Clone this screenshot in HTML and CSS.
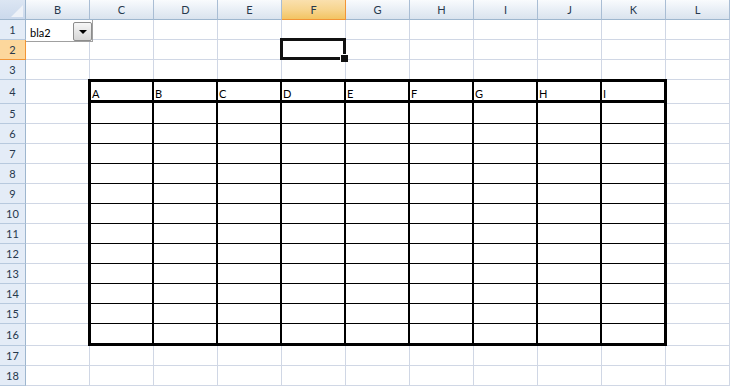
FILE: index.html
```html
<!DOCTYPE html>
<html lang="en">
<head>
  <meta charset="UTF-8" />
  <title>Book1 - Sheet1</title>
  <link rel="stylesheet" href="styles.css">
</head>
<body>

<div class="colheads">
  <div class="corner"></div>
  <div class="ch">B</div>
  <div class="ch">C</div>
  <div class="ch">D</div>
  <div class="ch">E</div>
  <div class="ch sel">F</div>
  <div class="ch">G</div>
  <div class="ch">H</div>
  <div class="ch">I</div>
  <div class="ch">J</div>
  <div class="ch">K</div>
  <div class="ch">L</div>
</div>

<div class="main">
  <div class="rowheads">
    <div class="rh">1</div>
    <div class="rh sel">2</div>
    <div class="rh">3</div>
    <div class="rh">4</div>
    <div class="rh">5</div>
    <div class="rh">6</div>
    <div class="rh">7</div>
    <div class="rh">8</div>
    <div class="rh">9</div>
    <div class="rh">10</div>
    <div class="rh">11</div>
    <div class="rh">12</div>
    <div class="rh">13</div>
    <div class="rh">14</div>
    <div class="rh">15</div>
    <div class="rh">16</div>
    <div class="rh">17</div>
    <div class="rh">18</div>
  </div>

  <div class="sheet">
    <!-- dropdown in B1 -->
    <div class="combo">
      <span>bla2</span>
      <div class="combo-btn"><i></i></div>
    </div>

    <!-- selected cell F2 -->
    <div class="c active"></div>

    <!-- bordered table C4:K16 -->
    <div class="tbl">
      <div class="th">A</div><div class="th">B</div><div class="th">C</div><div class="th">D</div><div class="th">E</div><div class="th">F</div><div class="th">G</div><div class="th">H</div><div class="th">I</div>
      <div></div><div></div><div></div><div></div><div></div><div></div><div></div><div></div><div></div>
      <div></div><div></div><div></div><div></div><div></div><div></div><div></div><div></div><div></div>
      <div></div><div></div><div></div><div></div><div></div><div></div><div></div><div></div><div></div>
      <div></div><div></div><div></div><div></div><div></div><div></div><div></div><div></div><div></div>
      <div></div><div></div><div></div><div></div><div></div><div></div><div></div><div></div><div></div>
      <div></div><div></div><div></div><div></div><div></div><div></div><div></div><div></div><div></div>
      <div></div><div></div><div></div><div></div><div></div><div></div><div></div><div></div><div></div>
      <div></div><div></div><div></div><div></div><div></div><div></div><div></div><div></div><div></div>
      <div></div><div></div><div></div><div></div><div></div><div></div><div></div><div></div><div></div>
      <div></div><div></div><div></div><div></div><div></div><div></div><div></div><div></div><div></div>
      <div></div><div></div><div></div><div></div><div></div><div></div><div></div><div></div><div></div>
      <div></div><div></div><div></div><div></div><div></div><div></div><div></div><div></div><div></div>
    </div>

    <!-- plain cells fill the remaining slots -->
    <!-- row 1 -->
    <div class="c"></div><div class="c"></div><div class="c"></div><div class="c"></div><div class="c"></div>
    <div class="c"></div><div class="c"></div><div class="c"></div><div class="c"></div><div class="c"></div>
    <!-- row 2 -->
    <div class="c"></div><div class="c"></div><div class="c"></div><div class="c"></div><div class="c"></div>
    <div class="c"></div><div class="c"></div><div class="c"></div><div class="c"></div><div class="c"></div>
    <!-- row 3 -->
    <div class="c"></div><div class="c"></div><div class="c"></div><div class="c"></div><div class="c"></div><div class="c"></div>
    <div class="c"></div><div class="c"></div><div class="c"></div><div class="c"></div><div class="c"></div>
    <!-- rows 4-16, columns B and L -->
    <div class="c"></div><div class="c"></div>
    <div class="c"></div><div class="c"></div>
    <div class="c"></div><div class="c"></div>
    <div class="c"></div><div class="c"></div>
    <div class="c"></div><div class="c"></div>
    <div class="c"></div><div class="c"></div>
    <div class="c"></div><div class="c"></div>
    <div class="c"></div><div class="c"></div>
    <div class="c"></div><div class="c"></div>
    <div class="c"></div><div class="c"></div>
    <div class="c"></div><div class="c"></div>
    <div class="c"></div><div class="c"></div>
    <div class="c"></div><div class="c"></div>
    <!-- rows 17-18 -->
    <div class="c"></div><div class="c"></div><div class="c"></div><div class="c"></div><div class="c"></div><div class="c"></div>
    <div class="c"></div><div class="c"></div><div class="c"></div><div class="c"></div><div class="c"></div>
    <div class="c"></div><div class="c"></div><div class="c"></div><div class="c"></div><div class="c"></div><div class="c"></div>
    <div class="c"></div><div class="c"></div><div class="c"></div><div class="c"></div><div class="c"></div>
  </div>
</div>

</body>
</html>
```

FILE: styles.css
```css
:root {
  --rows: 20px 20px 20px 24px repeat(11, 20px) 22px 20px 20px;
}
* {
  box-sizing: border-box;
}
body {
  margin: 0;
  background: #fff;
  font-family: Lato, "Liberation Sans", sans-serif;
  font-size: 11px;
  color: #000;
  overflow: hidden;
}

/* column headers */
.colheads {
  display: flex;
  height: 20px;
}
.corner {
  flex: none;
  width: 26px;
  position: relative;
  background: linear-gradient(#dce6f3, #cbd9ec);
  border-right: 1px solid #9eb6ce;
  border-bottom: 1px solid #9eb6ce;
}
.corner::after {
  content: "";
  position: absolute;
  right: 2px;
  bottom: 2px;
  border-style: solid;
  border-width: 0 0 12px 12px;
  border-color: transparent transparent #eef2f8 transparent;
}
.ch {
  flex: none;
  width: 64px;
  padding-top: 3px;
  line-height: 13px;
  text-align: center;
  color: #27384d;
  background: linear-gradient(#f9fbfd, #e9eff6 50%, #dae3ee);
  border-right: 1px solid #a9bdd4;
  border-bottom: 1px solid #9eb6ce;
}
.ch.sel {
  background: linear-gradient(#fae0ae, #f7d58f 50%, #f2c462);
  border-right-color: #f29536;
  border-bottom-color: #f29536;
}

/* row headers + sheet */
.main {
  display: flex;
}
.rowheads {
  flex: none;
  width: 26px;
  display: grid;
  grid-template-rows: var(--rows);
}
.rh {
  display: flex;
  align-items: center;
  justify-content: center;
  line-height: 13px;
  color: #27384d;
  background: #e4ecf7;
  border-right: 1px solid #9eb6ce;
  border-bottom: 1px solid #b7c9de;
}
.rh.sel {
  background: #fcd79c;
  border-right-color: #f29536;
  border-bottom-color: #f29536;
}
.sheet {
  display: grid;
  grid-template-columns: repeat(11, 64px);
  grid-template-rows: var(--rows);
}
.c {
  border-right: 1px solid #d0d7e5;
  border-bottom: 1px solid #d0d7e5;
}

/* dropdown control */
.combo {
  grid-column: 1;
  grid-row: 1;
  align-self: start;
  justify-self: start;
  width: 67px;
  height: 22px;
  position: relative;
  z-index: 2;
  display: flex;
  padding: 6px 0 0 4px;
  line-height: 13px;
  background: #fff;
  border-right: 1px solid #a0a0a0;
  border-bottom: 1px solid #a0a0a0;
}
.combo-btn {
  position: absolute;
  top: 2px;
  right: 0;
  width: 19px;
  height: 19px;
  display: flex;
  align-items: center;
  justify-content: center;
  border: 1px solid #8c8c8c;
  border-radius: 2px;
  background: linear-gradient(#f7f7f7, #e6e6e6 50%, #d6d6d6);
}
.combo-btn i {
  border-left: 4px solid transparent;
  border-right: 4px solid transparent;
  border-top: 4px solid #000;
}

/* active cell */
.c.active {
  grid-column: 5;
  grid-row: 2;
  position: relative;
  z-index: 1;
}
.c.active::before {
  content: "";
  position: absolute;
  top: -2px;
  left: -2px;
  right: -1px;
  bottom: -1px;
  border: 3px solid #111;
}
.c.active::after {
  content: "";
  position: absolute;
  right: -3px;
  bottom: -3px;
  width: 7px;
  height: 7px;
  background: #111;
  border-left: 1px solid #fff;
  border-top: 1px solid #fff;
}

/* bordered table */
.tbl {
  grid-column: 2 / 11;
  grid-row: 4 / 17;
  margin: -1px -1px 0 -2px;
  position: relative;
  z-index: 1;
  display: grid;
  grid-template-columns: 63px repeat(7, 64px) 62px;
  grid-template-rows: 21px 21px repeat(10, 20px) 19px;
  background: #fff;
  border: 3px solid #000;
}
.tbl div {
  border-right: 2px solid #000;
  border-bottom: 1px solid #000;
}
.tbl .th {
  display: flex;
  align-items: flex-end;
  padding-left: 1px;
  line-height: 13px;
  border-bottom-width: 3px;
}
.tbl div:nth-child(9n) {
  border-right: none;
}
.tbl div:nth-last-child(-n+9) {
  border-bottom: none;
}
```
